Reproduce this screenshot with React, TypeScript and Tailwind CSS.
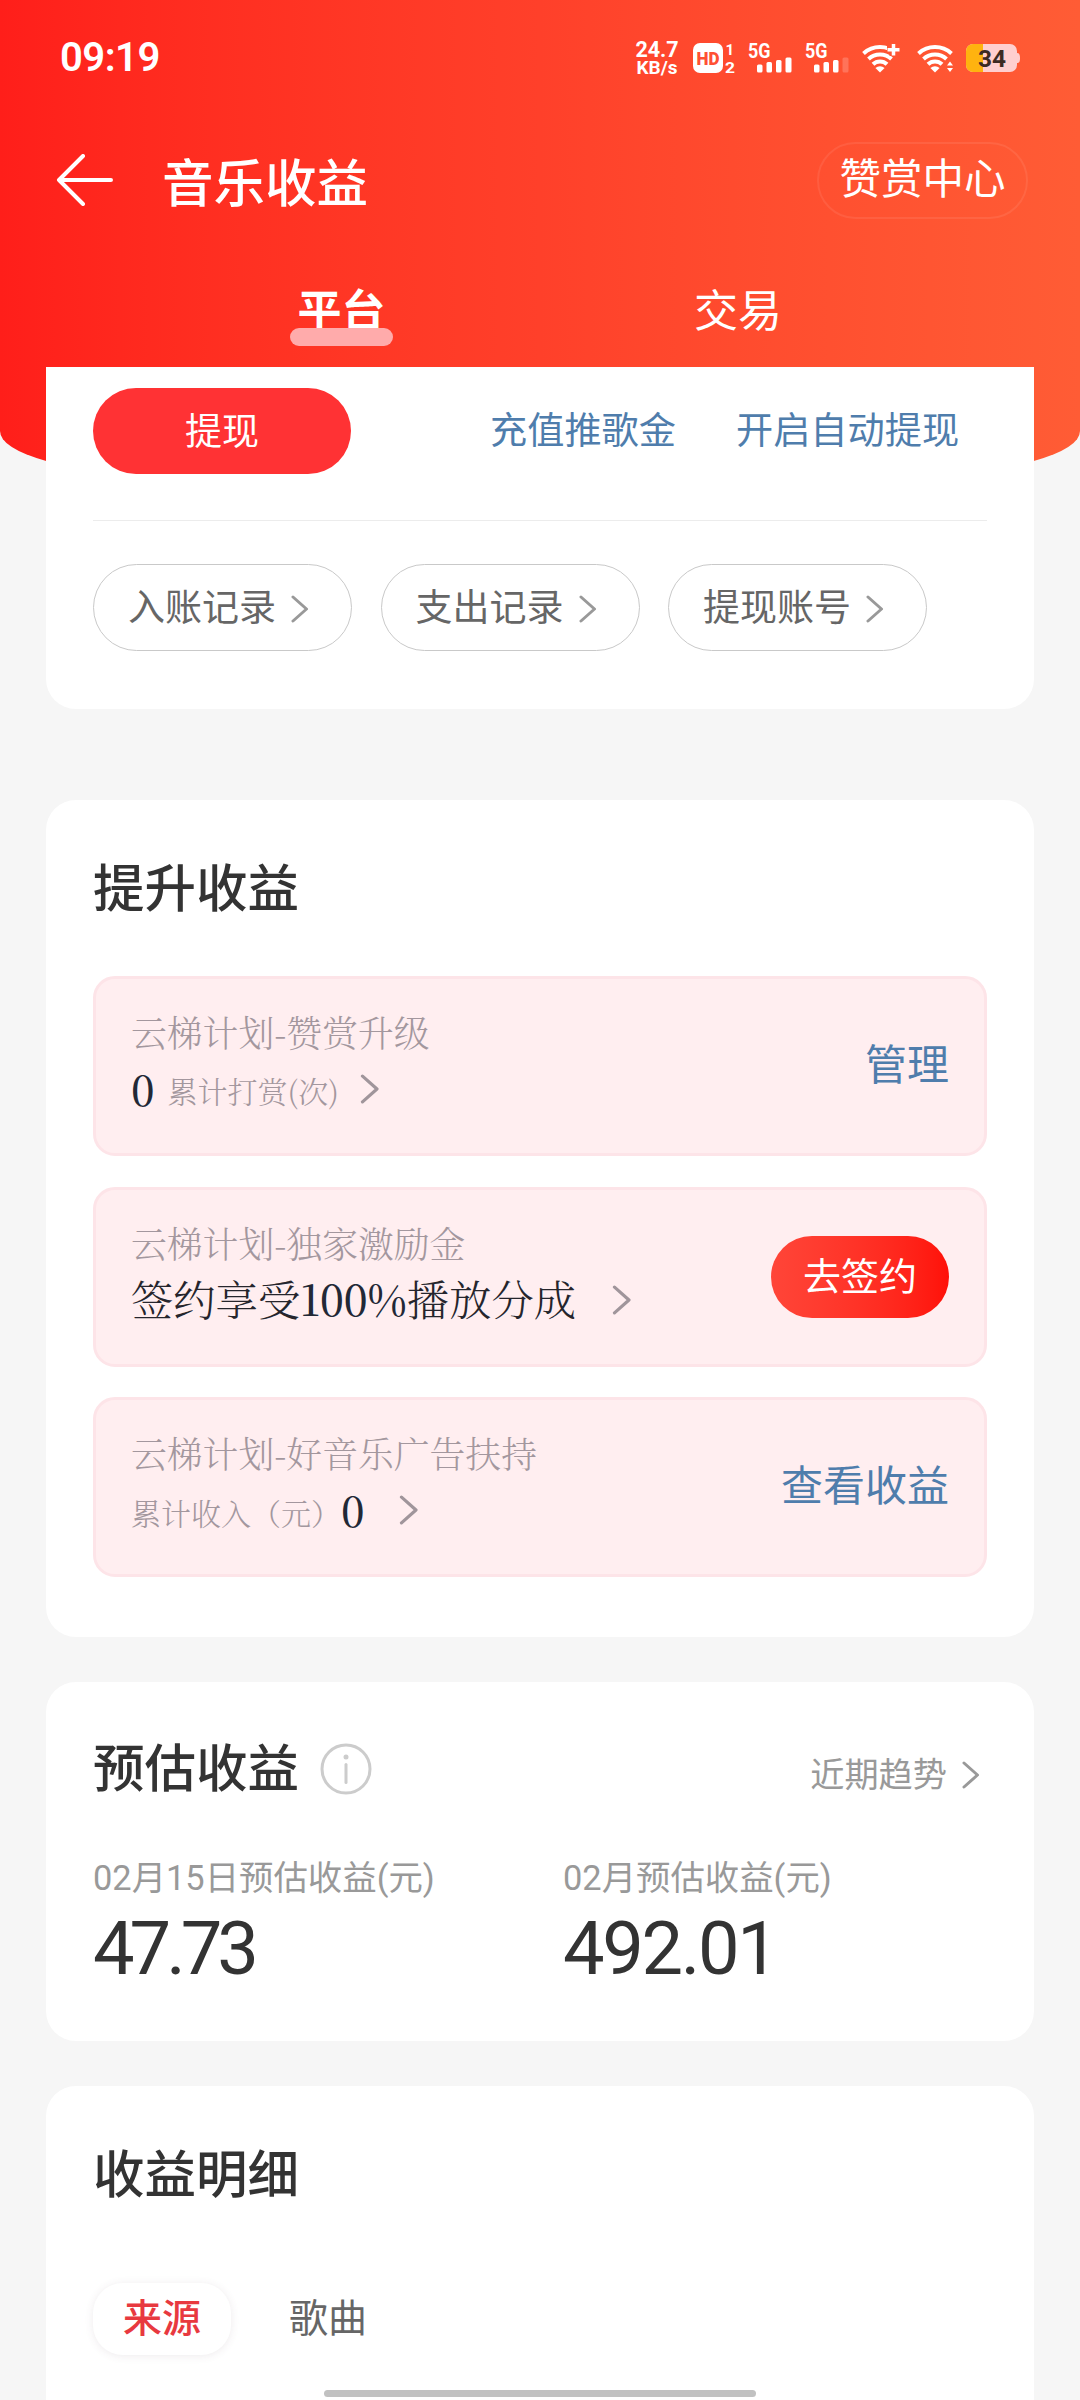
import type { ReactNode } from "react";
import clsx from "clsx";

const promos = [
  {
    id: "upgrade",
    title: "云梯计划-赞赏升级",
    detail: (
      <>
        <Digits>0</Digits>
        <span className="ml-[13px] pt-1 text-[30px] text-[#a3979e]">累计打赏(次)</span>
        <Chevron className="ml-[21px] mt-[3px] text-[#a0959b]" width={20} height={30} />
      </>
    ),
    action: <PromoLink>管理</PromoLink>,
  },
  {
    id: "exclusive",
    title: "云梯计划-独家激励金",
    detail: (
      <>
        <span className="text-[42.3px] text-[#25252c]">
          签约享受<Digits>100%</Digits>播放分成
        </span>
        <Chevron className="ml-[36px] mt-[3px] text-[#a0959b]" width={20} height={30} />
      </>
    ),
    action: (
      <button className="h-[82px] w-[178px] rounded-full bg-linear-to-r from-[#ff4538] to-[#ff1008] text-[38px] leading-none text-white">
        去签约
      </button>
    ),
  },
  {
    id: "ads",
    title: "云梯计划-好音乐广告扶持",
    detail: (
      <>
        <span className="pt-[6px] text-[30px] text-[#a3979e]">累计收入（元）</span>
        <Digits>0</Digits>
        <Chevron className="ml-[34px] mt-[3px] text-[#a0959b]" width={20} height={30} />
      </>
    ),
    action: <PromoLink>查看收益</PromoLink>,
  },
];

const records = ["入账记录", "支出记录", "提现账号"];

const estimates = [
  { label: "02月15日预估收益(元)", value: "47.73", tracking: "tracking-[-5px]" },
  { label: "02月预估收益(元)", value: "492.01", tracking: "tracking-[-2.3px]" },
];

function Digits({ children }: { children: ReactNode }) {
  return <span className="text-[42px] font-medium text-[#222836]">{children}</span>;
}

function PromoLink({ children }: { children: ReactNode }) {
  return <a className="text-[42px] leading-none text-[#4f7dac]">{children}</a>;
}

function Chevron({ className, width = 18, height = 28 }: { className?: string; width?: number; height?: number }) {
  return (
    <svg
      className={clsx("shrink-0", className)}
      width={width}
      height={height}
      viewBox="0 0 18 28"
      fill="none"
      stroke="currentColor"
      strokeWidth="3"
      strokeLinecap="round"
      strokeLinejoin="round"
    >
      <path d="M2 2l13.5 12L2 26" />
    </svg>
  );
}

function WifiFan() {
  return (
    <g fill="none" stroke="currentColor" strokeWidth="4">
      <path d="M1.5 10.5a24.5 24.5 0 0 1 33 0" />
      <path d="M6.5 16a16.8 16.8 0 0 1 23 0" />
      <path d="M11 21.3a10 10 0 0 1 14 0" />
      <path d="M18 29.5l-4.6-4.5a7 7 0 0 1 9.2 0z" fill="currentColor" stroke="none" />
    </g>
  );
}

function Signal({ weak }: { weak?: boolean }) {
  return (
    <svg className="overflow-visible" width="46" height="30" viewBox="0 0 46 30" fill="currentColor">
      <text x="0" y="15" fontSize="19.5" fontWeight="700" textLength="22.5" lengthAdjust="spacingAndGlyphs">
        5G
      </text>
      <rect x="9" y="21.5" width="5.5" height="8" rx="1.5" />
      <rect x="18.5" y="19" width="5.5" height="10.5" rx="1.5" />
      <rect x="28" y="17" width="5.5" height="12.5" rx="1.5" />
      <rect x="37.5" y="14.5" width="6" height="15" rx="1.5" opacity={weak ? 0.2 : 1} />
    </svg>
  );
}

function StatusBar() {
  return (
    <div className="flex h-[116px] items-center justify-between px-[60px] text-white">
      <span className="text-[40px] font-semibold leading-none tracking-[-0.5px]">09:19</span>
      <div className="flex items-center">
        <div className="flex w-[44px] flex-col items-center pt-px font-bold">
          <span className="text-[21.5px] leading-[18px]">24.7</span>
          <span className="text-[19px] leading-[18px]">KB/s</span>
        </div>
        <svg className="ml-[14px] overflow-visible" width="43" height="30" viewBox="0 0 43 30" fill="currentColor" fontWeight="700">
          <rect x="0" y="0" width="30" height="30" rx="7" />
          <text x="3.5" y="21.8" fontSize="19" fontWeight="900" fill="#ff5033" textLength="23" lengthAdjust="spacingAndGlyphs">
            HD
          </text>
          <text x="32.5" y="11.5" fontSize="15">1</text>
          <text x="32" y="29.5" fontSize="15" textLength="10" lengthAdjust="spacingAndGlyphs">2</text>
        </svg>
        <span className="ml-[12px]"><Signal /></span>
        <span className="ml-[11px]"><Signal weak /></span>
        <svg className="ml-[11px]" width="40" height="30" viewBox="0 0 40 30">
          <WifiFan />
          <path d="M31.5 0v13M25 6.5h13" stroke="#ff5533" strokeWidth="8" />
          <path d="M31.5 1v11.5M25.5 6.8h12" stroke="currentColor" strokeWidth="3.5" />
        </svg>
        <svg className="ml-[15px]" width="38" height="30" viewBox="0 0 38 30">
          <WifiFan />
          <path d="M28 18h9v12h-9z" fill="#ff5733" />
          <path d="M33 18.5l3 4h-6zM33 29l3-4h-6z" fill="currentColor" />
        </svg>
        <svg className="ml-[11px]" width="54" height="28" viewBox="0 0 54 28">
          <rect x="0" y="0" width="51" height="28" rx="7" fill="#ffcfcf" />
          <path d="M7 0h10v28H7a7 7 0 0 1-7-7V7a7 7 0 0 1 7-7z" fill="#ffb30f" />
          <path d="M51 9c2.5 0 3 2 3 5s-.5 5-3 5z" fill="#ffcfcf" />
          <text x="12" y="22.5" fontSize="24" fontWeight="700" fill="#3d2a22" textLength="28" lengthAdjust="spacingAndGlyphs">
            34
          </text>
        </svg>
      </div>
    </div>
  );
}

function Header() {
  return (
    <header className="h-[473px] bg-linear-to-r from-[#ff1e1a] via-[#ff402a] to-[#ff5c35] text-white [border-radius:0_0_155px_155px/0_0_42px_42px]">
      <StatusBar />
      <div className="flex h-[128px] items-center pl-[56px] pr-[52px]">
        <svg width="58" height="52" viewBox="0 0 58 52" fill="none" stroke="currentColor" strokeWidth="4" strokeLinecap="round" strokeLinejoin="round">
          <path d="M55 26H3M27 2L3 26l24 24" />
        </svg>
        <h1 className="ml-[48px] pt-[9px] text-[51.5px] font-medium leading-none">音乐收益</h1>
        <a className="ml-auto flex h-[77px] w-[211px] items-center justify-center rounded-full border-2 border-white/8 text-[41.5px] leading-none">
          赞赏中心
        </a>
      </div>
      <nav className="flex h-[123px] justify-between pl-[290px] pr-[298px] pt-[43px] text-[44px] leading-none">
        <div className="relative flex h-[60px] w-[103px] justify-center pt-[3px] font-bold">
          平台
          <span className="absolute bottom-[1px] left-0 h-[18px] w-full rounded-full bg-[#ffabab]" />
        </div>
        <span className="pt-[3px]">交易</span>
      </nav>
    </header>
  );
}

function Card({ className, children }: { className?: string; children: ReactNode }) {
  return <section className={clsx("mx-[46px] bg-white px-[47px]", className)}>{children}</section>;
}

function SectionTitle({ children }: { children: ReactNode }) {
  return <h2 className="pt-[2px] text-[51.5px] font-medium leading-none text-[#333]">{children}</h2>;
}

export default function App() {
  return (
    <main className="h-[2400px] w-[1080px] overflow-hidden bg-[#f6f6f6] font-[Roboto,'Noto_Sans_CJK_SC',sans-serif]">
      <Header />

      {/* Withdraw, slides up over the red header */}
      <Card className="relative -mt-[106px] h-[342px] rounded-b-[30px] pt-[21px]">
        <div className="flex h-[86px] items-center text-[37.2px] leading-none text-[#4f7dac]">
          <button className="h-full w-[258px] rounded-full bg-[#ff3234] pt-[2px] text-[37px] leading-none text-white">提现</button>
          <a className="ml-[139px] pt-[2px]">充值推歌金</a>
          <a className="ml-[60px] pt-[2px]">开启自动提现</a>
        </div>
        <div className="mt-[46px] h-px bg-[#ececec]" />
        <div className="mt-[43px] flex gap-[28.5px]">
          {records.map((label) => (
            <a
              key={label}
              className="flex h-[87px] w-[259px] items-center rounded-full border-[1.5px] border-[#c9c9c9] pl-[34px] pt-[2px] text-[37px] leading-none text-[#666]"
            >
              {label}
              <Chevron className="ml-[15px] mt-px text-[#999]" />
            </a>
          ))}
        </div>
      </Card>

      {/* Boost earnings */}
      <Card className="mt-[91px] h-[837px] rounded-[30px] pt-[62px]">
        <SectionTitle>提升收益</SectionTitle>
        <div className="mt-[60.5px] space-y-[30.5px]">
          {promos.map((promo) => (
            <div
              key={promo.id}
              className="flex h-[180px] items-center justify-between rounded-[22px] border-[3px] border-[#fde4e8] bg-[#ffeef0] px-[35px]"
            >
              <div className="font-['Noto_Serif_CJK_SC','Noto_Sans_CJK_SC',serif] font-light">
                <p className="text-[35.8px] leading-none text-[#a3979e]">{promo.title}</p>
                <div className="mt-[8px] flex h-[60px] items-center leading-none">{promo.detail}</div>
              </div>
              {promo.action}
            </div>
          ))}
        </div>
      </Card>

      {/* Estimated earnings */}
      <Card className="mt-[45px] h-[359px] rounded-[30px] pt-[60px]">
        <div className="flex items-center">
          <SectionTitle>预估收益</SectionTitle>
          <svg className="ml-[21px]" width="52" height="52" viewBox="0 0 52 52" fill="none" stroke="#ccc" strokeWidth="3">
            <circle cx="26" cy="26" r="24" />
            <path d="M26 21.5v18" strokeLinecap="round" />
            <circle cx="26" cy="14" r="2.5" fill="#ccc" stroke="none" />
          </svg>
          <a className="ml-auto flex items-center pr-[7px] pt-[13px] text-[34.2px] leading-none text-[#999]">
            近期趋势
            <Chevron className="ml-[15px]" />
          </a>
        </div>
        <div className="mt-[65px] flex">
          {estimates.map(({ label, value, tracking }) => (
            <div key={label} className="w-[470px] shrink-0 leading-none">
              <p className="text-[34.4px] leading-none text-[#999]">{label}</p>
              <p className={clsx("mt-[17px] text-[74px] leading-none text-[#333]", tracking)}>{value}</p>
            </div>
          ))}
        </div>
      </Card>

      {/* Earnings details */}
      <Card className="relative mt-[45px] h-[314px] rounded-t-[30px] pt-[62px]">
        <SectionTitle>收益明细</SectionTitle>
        <div className="mt-[81px] flex items-center text-[39px] leading-none">
          <span className="flex h-[72px] w-[138px] items-center justify-center rounded-[30px] bg-white pt-[2px] font-medium text-[#e8393f] shadow-[0_1px_8px_rgba(90,60,80,0.10)]">
            来源
          </span>
          <span className="ml-[58px] pt-[2px] text-[#666]">歌曲</span>
        </div>
        <div className="absolute bottom-[3px] left-[278px] h-[7px] w-[432px] rounded-full bg-[#c1c1c1]" />
      </Card>
    </main>
  );
}
